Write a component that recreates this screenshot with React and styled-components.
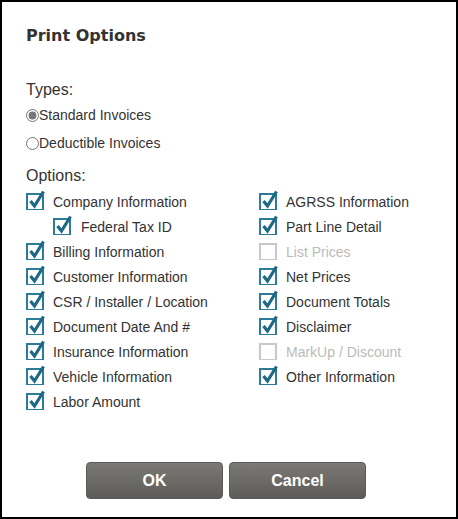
import React, { useState } from 'react';
import styled, { createGlobalStyle } from 'styled-components';

const leftOptions = [
  { label: 'Company Information', checked: true },
  { label: 'Federal Tax ID', checked: true, indent: true },
  { label: 'Billing Information', checked: true },
  { label: 'Customer Information', checked: true },
  { label: 'CSR / Installer / Location', checked: true },
  { label: 'Document Date And #', checked: true },
  { label: 'Insurance Information', checked: true },
  { label: 'Vehicle Information', checked: true },
  { label: 'Labor Amount', checked: true },
];

const rightOptions = [
  { label: 'AGRSS Information', checked: true },
  { label: 'Part Line Detail', checked: true },
  { label: 'List Prices', checked: false, disabled: true },
  { label: 'Net Prices', checked: true },
  { label: 'Document Totals', checked: true },
  { label: 'Disclaimer', checked: true },
  { label: 'MarkUp / Discount', checked: false, disabled: true },
  { label: 'Other Information', checked: true },
];

function CheckIcon({ checked, disabled }) {
  return (
    <svg width="20" height="20" viewBox="0 0 20 20">
      <rect
        x="2" y="4" width="16" height="16"
        fill="#fff"
        stroke={disabled ? '#c8c8c8' : '#2b7b99'}
        strokeWidth="2"
      />
      {checked && (
        <path
          d="M5.5 11 L9.5 16 L18.5 1.5"
          fill="none"
          stroke="#1d6986"
          strokeWidth="3.2"
          strokeLinejoin="miter"
        />
      )}
    </svg>
  );
}

function Option({ label, checked, disabled, indent }) {
  return (
    <Dialog.Row indent={indent}>
      <CheckIcon checked={checked} disabled={disabled} />
      <Dialog.Label disabled={disabled}>{label}</Dialog.Label>
    </Dialog.Row>
  );
}

function App() {
  const [type, setType] = useState('standard');

  return (
    <Dialog.Wrapper>
      <CSSReset />
      <Dialog.Title>Print Options</Dialog.Title>

      <Dialog.Heading>Types:</Dialog.Heading>
      <Dialog.Radio>
        <input type="radio" name="type" checked={type === 'standard'} onChange={() => setType('standard')} />
        Standard Invoices
      </Dialog.Radio>
      <Dialog.Radio>
        <input type="radio" name="type" checked={type === 'deductible'} onChange={() => setType('deductible')} />
        Deductible Invoices
      </Dialog.Radio>

      <Dialog.Heading options>Options:</Dialog.Heading>
      <Dialog.Columns>
        <Dialog.Column>
          {leftOptions.map((o) => <Option key={o.label} {...o} />)}
        </Dialog.Column>
        <Dialog.Column>
          {rightOptions.map((o) => <Option key={o.label} {...o} />)}
        </Dialog.Column>
      </Dialog.Columns>

      <Dialog.Buttons>
        <Dialog.Button>OK</Dialog.Button>
        <Dialog.Button>Cancel</Dialog.Button>
      </Dialog.Buttons>
    </Dialog.Wrapper>
  );
}

const CSSReset = createGlobalStyle`
  *,
  *::before,
  *::after {
    box-sizing: border-box;
    margin: 0;
    padding: 0;
  }

  body {
    background: #fff;
    font-family: "Liberation Sans", Arial, sans-serif;
    color: #333;
  }
`;

const Dialog = {
  Wrapper: styled.main`
    width: 458px;
    height: 519px;
    border: 2px solid #000;
    background: #fff;
    padding: 24px 0 0 24px;
    display: flex;
    flex-direction: column;
  `,
  Title: styled.h1`
    font-family: "DejaVu Sans", Verdana, sans-serif;
    font-size: 16px;
    font-weight: bold;
    color: #333;
    line-height: 20px;
    margin-bottom: 34px;
  `,
  Heading: styled.div`
    font-size: 16px;
    line-height: 20px;
    color: #333;
    margin-top: ${({ options }) => (options ? '3px' : '0')};
    margin-bottom: ${({ options }) => (options ? '3px' : '7px')};
  `,
  Radio: styled.label`
    display: flex;
    align-items: center;
    font-size: 14px;
    line-height: 16px;
    color: #333;
    height: 16px;
    margin-bottom: 12px;

    input {
      width: 13px;
      height: 13px;
      margin: 0;
      accent-color: #777;
    }
  `,
  Columns: styled.div`
    display: grid;
    grid-template-columns: 233px 1fr;
  `,
  Column: styled.div`
    display: flex;
    flex-direction: column;
  `,
  Row: styled.div`
    display: flex;
    align-items: center;
    gap: 8px;
    height: 25px;
    padding-left: ${({ indent }) => (indent ? '27px' : '0')};

    svg {
      flex: none;
      margin-top: -3px;
      margin-left: -1px;
      ${({ indent }) => indent && 'margin-right: 1px;'}
    }
  `,
  Label: styled.span`
    font-size: 14px;
    color: ${({ disabled }) => (disabled ? '#bbb' : '#333')};
  `,
  Buttons: styled.div`
    margin-top: auto;
    margin-bottom: 18px;
    margin-left: 60px;
    display: flex;
    gap: 6px;
  `,
  Button: styled.button`
    width: 137px;
    height: 37px;
    border: 1px solid #5a5955;
    border-radius: 4px;
    background: linear-gradient(#7b7975, #5d5c58);
    color: #fff;
    font-family: "Liberation Sans", Arial, sans-serif;
    font-size: 16px;
    font-weight: bold;
    cursor: pointer;
  `,
};

export default App;
